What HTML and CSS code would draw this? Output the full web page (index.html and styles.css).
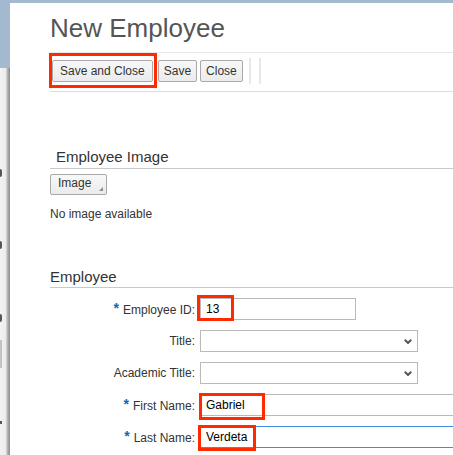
FILE: index.html
```html
<!DOCTYPE html>
<html>
<head>
<meta charset="utf-8">
<link rel="stylesheet" href="styles.css">
</head>
<body>
<div class="page">
  <div class="side">
    <div class="side-top"></div>
    <div class="side-rest">
      <span class="mark m1"></span>
      <span class="mark m2"></span>
      <span class="mark m3"></span>
      <span class="side-block"></span>
      <span class="mark m4"></span>
    </div>
  </div>
  <div class="dialog">
    <h1 class="title">New Employee</h1>
    <div class="toolbar">
      <button class="btn btn-wide">Save and Close</button>
      <button class="btn">Save</button>
      <button class="btn">Close</button>
      <span class="sep"></span>
      <span class="sep"></span>
    </div>

    <h2 class="section-head indent">Employee Image</h2>
    <button class="btn btn-menu">Image<svg class="tri" width="4" height="4" viewBox="0 0 4 4"><polygon points="4,0 4,4 0,4" fill="#8a8a8a"/></svg></button>
    <p class="noimg">No image available</p>

    <h2 class="section-head head-emp">Employee</h2>
    <div class="form">
      <label class="lbl"><span class="req">*</span>Employee ID:</label>
      <div class="field"><input class="inp inp-id" type="text" value="13"></div>

      <label class="lbl">Title:</label>
      <div class="field"><div class="sel"><svg width="8" height="5" viewBox="0 0 8 5"><polyline points="0.8,0.8 4,4 7.2,0.8" fill="none" stroke="#555" stroke-width="2"/></svg></div></div>

      <label class="lbl">Academic Title:</label>
      <div class="field"><div class="sel"><svg width="8" height="5" viewBox="0 0 8 5"><polyline points="0.8,0.8 4,4 7.2,0.8" fill="none" stroke="#555" stroke-width="2"/></svg></div></div>

      <label class="lbl"><span class="req">*</span>First Name:</label>
      <div class="field"><input class="inp inp-long" type="text" value="Gabriel"></div>

      <label class="lbl"><span class="req">*</span>Last Name:</label>
      <div class="field"><input class="inp inp-long inp-focus" type="text" value="Verdeta"></div>
    </div>

    <div class="hl hl-save"></div>
    <div class="hl hl-id"></div>
    <div class="hl hl-first"></div>
    <div class="hl hl-last"></div>
  </div>
</div>
</body>
</html>
```

FILE: styles.css
```css
html, body {
  margin: 0;
  padding: 0;
}
body {
  background: #a2b9cf;
  overflow: hidden;
  font-family: "Liberation Sans", Arial, sans-serif;
  color: #333;
}
.page {
  display: flex;
  width: 453px;
  height: 455px;
  overflow: hidden;
}
.side {
  width: 10px;
  flex: none;
  display: flex;
  flex-direction: column;
}
.side-top {
  height: 68px;
  flex: none;
}
.side-rest {
  flex: 1;
  background: linear-gradient(to right, #f3f3f3 0%, #ececec 55%, #b5b5b5 75%, #8a8a8a 100%);
  display: flex;
  flex-direction: column;
  align-items: flex-start;
}
.mark {
  display: block;
  width: 2px;
  height: 8px;
  background: #555;
  border-radius: 0 3px 3px 0;
}
.m1 { margin-top: 101px; }
.m2 { margin-top: 64px; }
.m3 { margin-top: 65px; }
.side-block {
  display: block;
  width: 2px;
  height: 28px;
  margin-top: 18px;
  background: #c2c2c2;
}
.m4 {
  margin-top: 53px;
  height: 3px;
  border-radius: 0;
}
.dialog {
  position: relative;
  flex: none;
  width: 700px;
  margin-top: 3px;
  background: #fff;
  padding: 10px 0 0 40px;
  box-sizing: border-box;
}
.title {
  margin: 0;
  font-size: 26px;
  line-height: 30px;
  font-weight: normal;
  color: #555;
}
.toolbar {
  margin-top: 9px;
  border-top: 1px solid #e8e8e8;
  border-bottom: 1px solid #dcdcdc;
  padding: 5px 0 7px 2px;
  display: flex;
  align-items: center;
  gap: 3px;
}
.btn {
  font-family: "Liberation Sans", Arial, sans-serif;
  font-size: 12px;
  color: #333;
  height: 22px;
  padding: 0 5px;
  margin: 0;
  border: 1px solid #a9a9a9;
  border-radius: 2px;
  background: linear-gradient(#f8f8f8, #ebebeb);
  line-height: 20px;
  box-sizing: border-box;
}
.btn-wide {
  padding: 0 7px;
  margin-right: 2px;
}
.sep {
  width: 2px;
  height: 26px;
  background: #e8e8e8;
}
.sep:first-of-type {
  margin-left: 3px;
}
.sep + .sep {
  margin-left: 5px;
}
.section-head {
  margin: 56px 0 0 0;
  font-size: 15px;
  line-height: 18px;
  font-weight: normal;
  color: #333;
  padding-bottom: 2px;
  border-bottom: 1px solid #c8c8c8;
}
.indent {
  padding-left: 6px;
}
.btn-menu {
  display: flex;
  align-items: flex-end;
  height: 21px;
  margin-top: 5px;
  padding: 0 3px 3px 7px;
  line-height: 16px;
}
.tri {
  margin-left: 8px;
  margin-bottom: 0;
}
.noimg {
  margin: 12px 0 0 0;
  font-size: 12px;
  line-height: 14px;
}
.head-emp {
  margin-top: 47px;
  padding-bottom: 1px;
}
.form {
  margin-top: 10px;
  display: grid;
  grid-template-columns: 150px 1fr;
  row-gap: 10px;
  align-items: center;
}
.lbl {
  text-align: right;
  padding-right: 5px;
  font-size: 12px;
  color: #333;
  line-height: 14px;
}
.req {
  color: #0f67b1;
  font-weight: bold;
  font-size: 14px;
  margin-right: 4px;
  vertical-align: 1px;
}
.field {
  display: flex;
}
.inp {
  height: 22px;
  box-sizing: border-box;
  border: 1px solid #b9b9b9;
  padding: 0 5px;
  margin: 0;
  font-family: "Liberation Sans", Arial, sans-serif;
  font-size: 12px;
  color: #000;
  background: #fff;
  outline: none;
}
.inp-id { width: 156px; }
.inp-long { width: 320px; }
.inp-focus { border-color: #3c8ee2; }
.sel {
  width: 218px;
  height: 22px;
  box-sizing: border-box;
  border: 1px solid #b9b9b9;
  display: flex;
  align-items: center;
  justify-content: flex-end;
  padding-right: 5px;
}
.hl {
  position: absolute;
  border: 3px solid #ff2a00;
  box-sizing: border-box;
}
.hl-save { left: 39px; top: 50px; width: 108px; height: 35px; }
.hl-id { left: 187px; top: 292px; width: 37px; height: 26px; }
.hl-first { left: 189px; top: 390px; width: 66px; height: 27px; }
.hl-last { left: 188px; top: 422px; width: 58px; height: 26px; }
```
